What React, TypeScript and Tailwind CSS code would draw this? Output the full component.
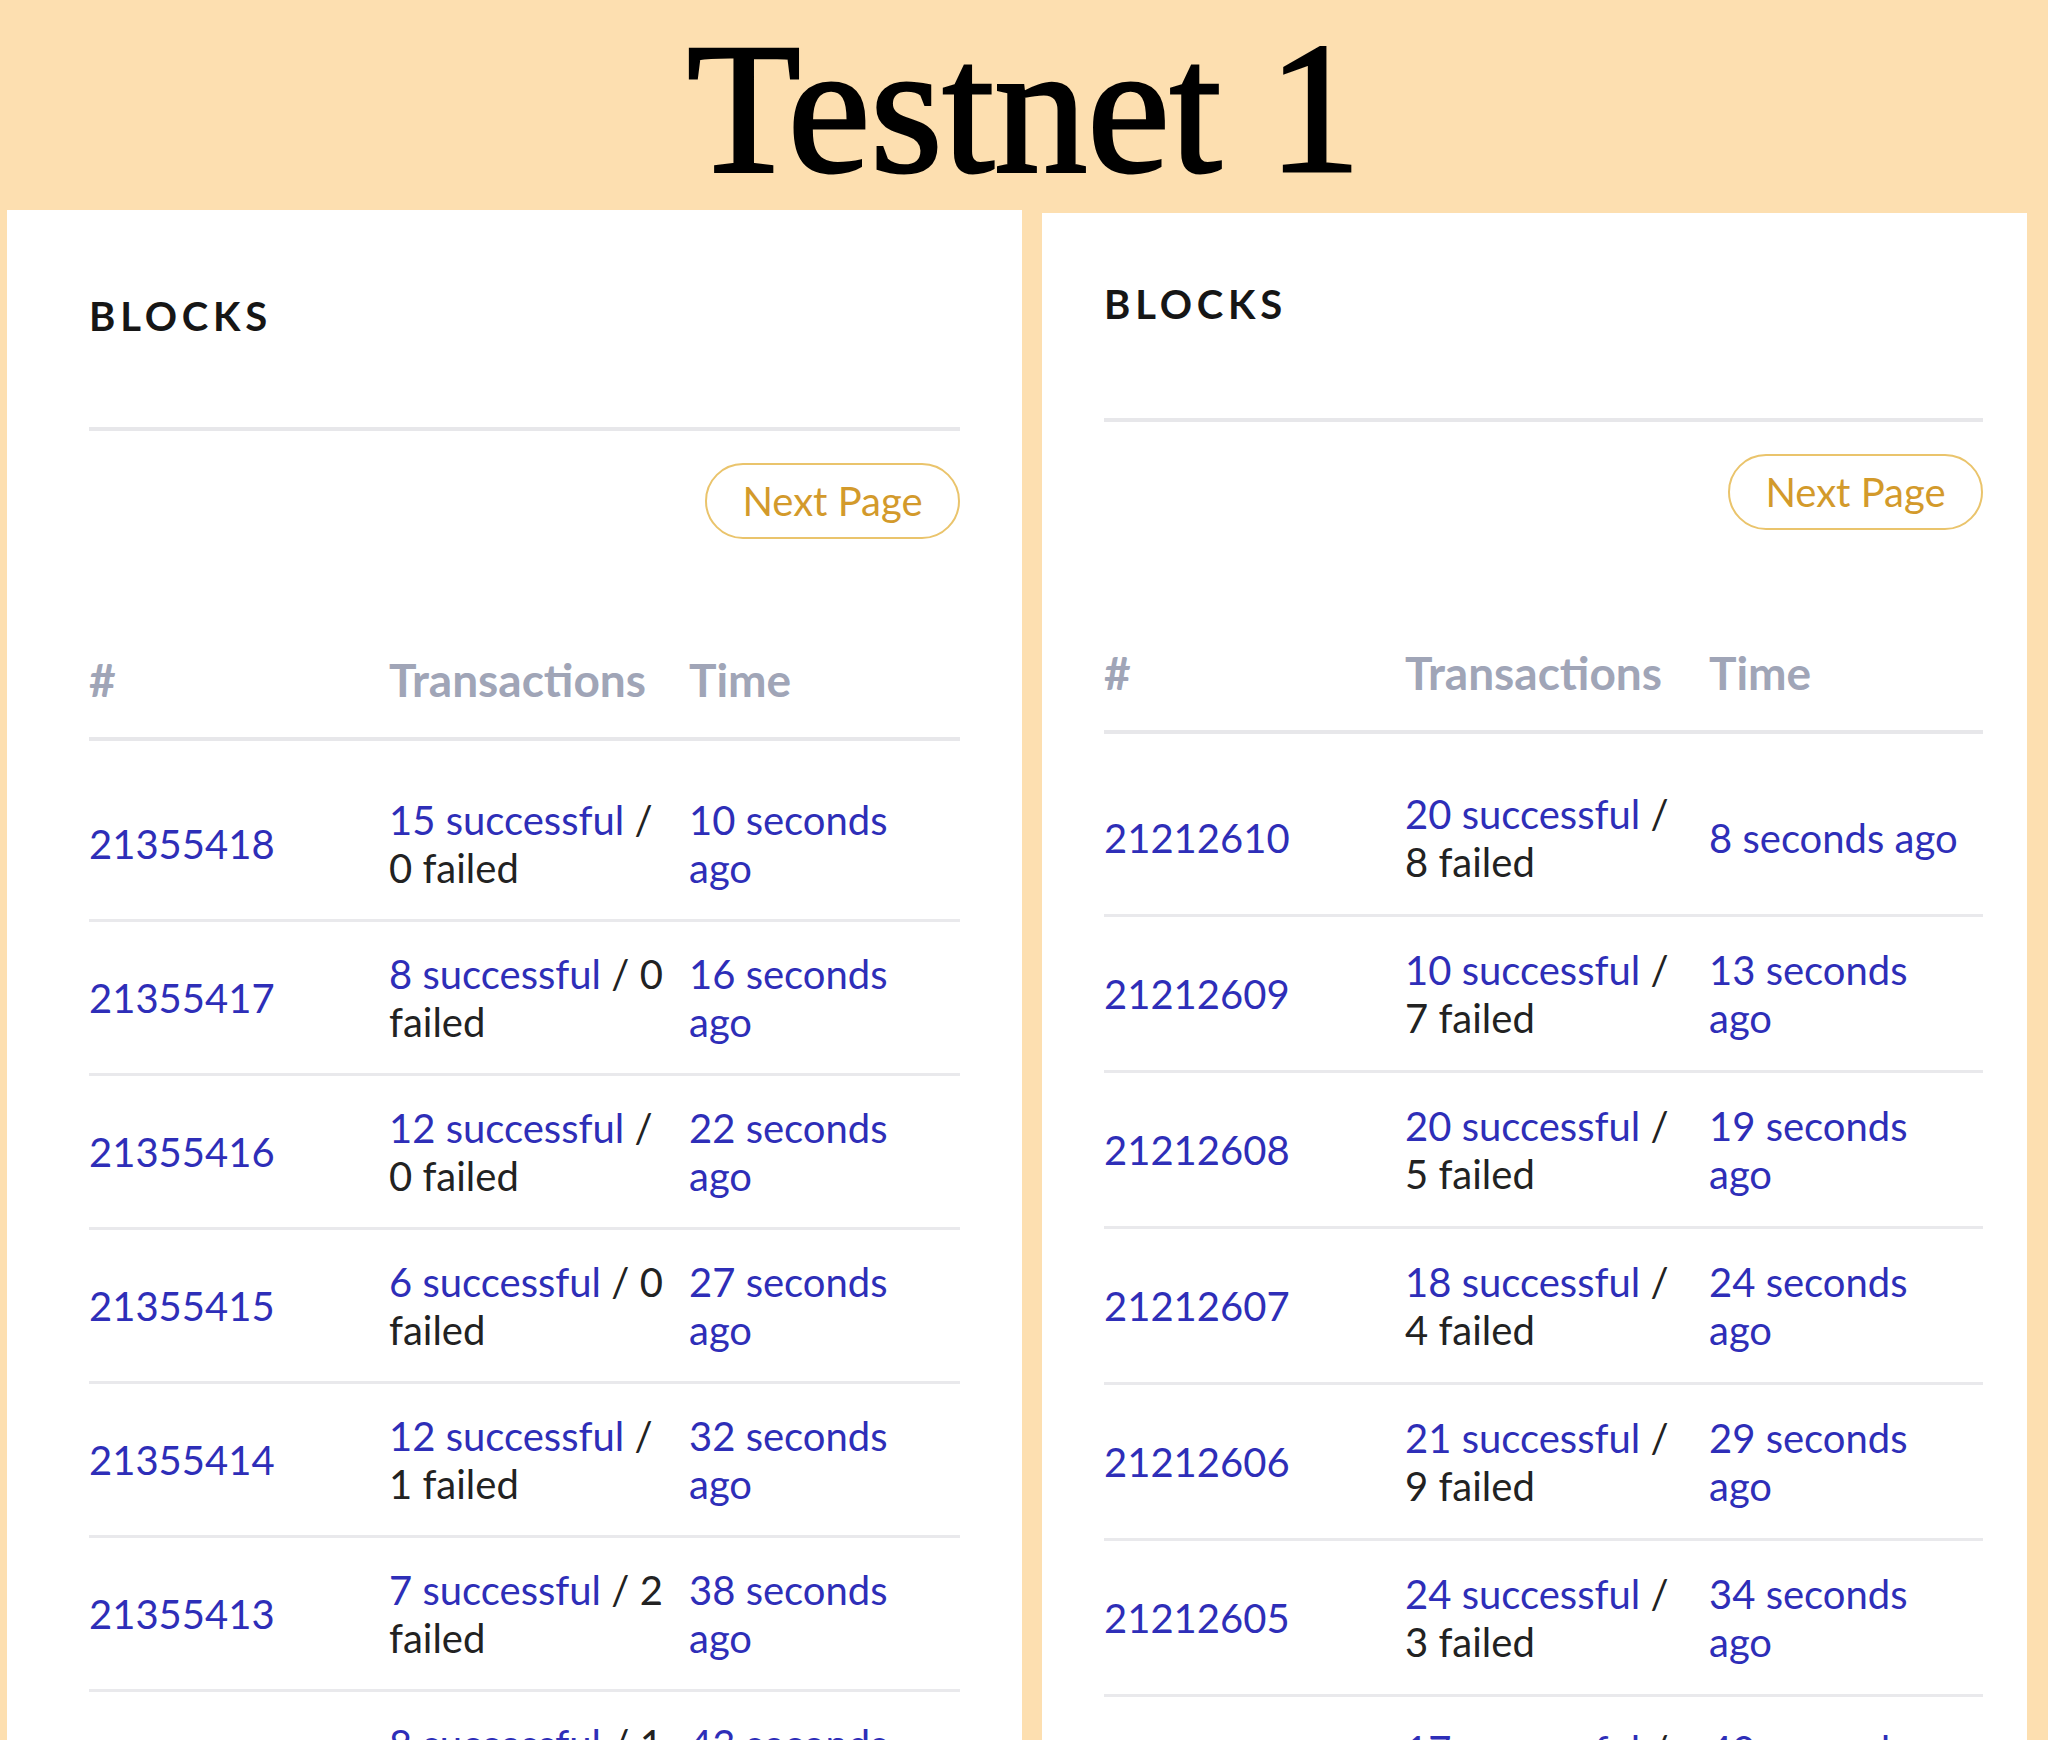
import type { ReactNode } from 'react'

type Block = { num: string; ok: number; failed: number; secs: number }

const LEFT: Block[] = [
  { num: '21355418', ok: 15, failed: 0, secs: 10 },
  { num: '21355417', ok: 8, failed: 0, secs: 16 },
  { num: '21355416', ok: 12, failed: 0, secs: 22 },
  { num: '21355415', ok: 6, failed: 0, secs: 27 },
  { num: '21355414', ok: 12, failed: 1, secs: 32 },
  { num: '21355413', ok: 7, failed: 2, secs: 38 },
  { num: '21355412', ok: 8, failed: 1, secs: 43 },
]

const RIGHT: Block[] = [
  { num: '21212610', ok: 20, failed: 8, secs: 8 },
  { num: '21212609', ok: 10, failed: 7, secs: 13 },
  { num: '21212608', ok: 20, failed: 5, secs: 19 },
  { num: '21212607', ok: 18, failed: 4, secs: 24 },
  { num: '21212606', ok: 21, failed: 9, secs: 29 },
  { num: '21212605', ok: 24, failed: 3, secs: 34 },
  { num: '21212604', ok: 17, failed: 2, secs: 40 },
]

const font = { fontFamily: 'Lato, "Open Sans", sans-serif' }

function Panel({ blocks, pad, titleGap, headGap, cols, rowH }: {
  blocks: Block[]; pad: string; titleGap: string; headGap: string; cols: string; rowH: string
}) {
  return (
    <div className={`bg-white ${pad}`} style={font}>
      <h2 className="text-[40px] font-bold leading-[48px] tracking-[0.12em] text-[#161616]">BLOCKS</h2>
      <div className={`${titleGap} h-[4px] bg-[#e7e7ea]`} />
      <div className="mt-[32px] flex justify-end">
        <button className="h-[76px] w-[255px] rounded-full border-2 border-[#eac46c] text-[40px] leading-none text-[#d39a2b]">
          Next Page
        </button>
      </div>
      <div className={`${headGap} grid ${cols} border-b-4 border-[#e7e7ea] pb-[31px] text-[46px] font-bold leading-[53px] text-[#a0a5b7]`}>
        <div>#</div>
        <div>Transactions</div>
        <div>Time</div>
      </div>
      <div className="pt-[27px]">
        {blocks.map((b) => (
          <Row key={b.num} b={b} cols={cols} rowH={rowH} />
        ))}
      </div>
    </div>
  )
}

function Row({ b, cols, rowH }: { b: Block; cols: string; rowH: string }) {
  return (
    <div className={`grid ${cols} ${rowH} items-center border-b-[3px] border-[#e9e9ec] text-[40px] leading-[48px]`}>
      <Link>{b.num}</Link>
      <div className="pr-[20px] text-[#222]">
        <Link>{b.ok} successful</Link> / {b.failed} failed
      </div>
      <div className="pr-[20px]">
        <Link>{b.secs} seconds ago</Link>
      </div>
    </div>
  )
}

function Link({ children }: { children: ReactNode }) {
  return <span className="text-[#2e2eb8]">{children}</span>
}

export default function App() {
  return (
    <div className="h-[1740px] w-[2048px] overflow-hidden bg-[#fddfb0]">
      <div className="flex h-[210px] justify-center pt-[15px]">
        <h1
          className="text-[186px] leading-none text-black [-webkit-text-stroke:3px_black]"
          style={{ fontFamily: '"Liberation Serif", serif' }}
        >
          Testnet 1
        </h1>
      </div>
      <div className="flex items-start gap-[20px] pl-[7px]">
        <div className="w-[1015px] shrink-0">
          <Panel
            blocks={LEFT}
            pad="pt-[82px] pl-[82px] pr-[62px] min-h-[1600px]"
            titleGap="mt-[87px]"
            headGap="mt-[114px]"
            cols="grid-cols-[300px_300px_1fr]"
            rowH="h-[154px]"
          />
        </div>
        <div className="mt-[3px] w-[985px] shrink-0">
          <Panel
            blocks={RIGHT}
            pad="pt-[67px] pl-[62px] pr-[44px] min-h-[1600px]"
            titleGap="mt-[90px]"
            headGap="mt-[116px]"
            cols="grid-cols-[301px_304px_1fr]"
            rowH="h-[156px]"
          />
        </div>
      </div>
    </div>
  )
}
